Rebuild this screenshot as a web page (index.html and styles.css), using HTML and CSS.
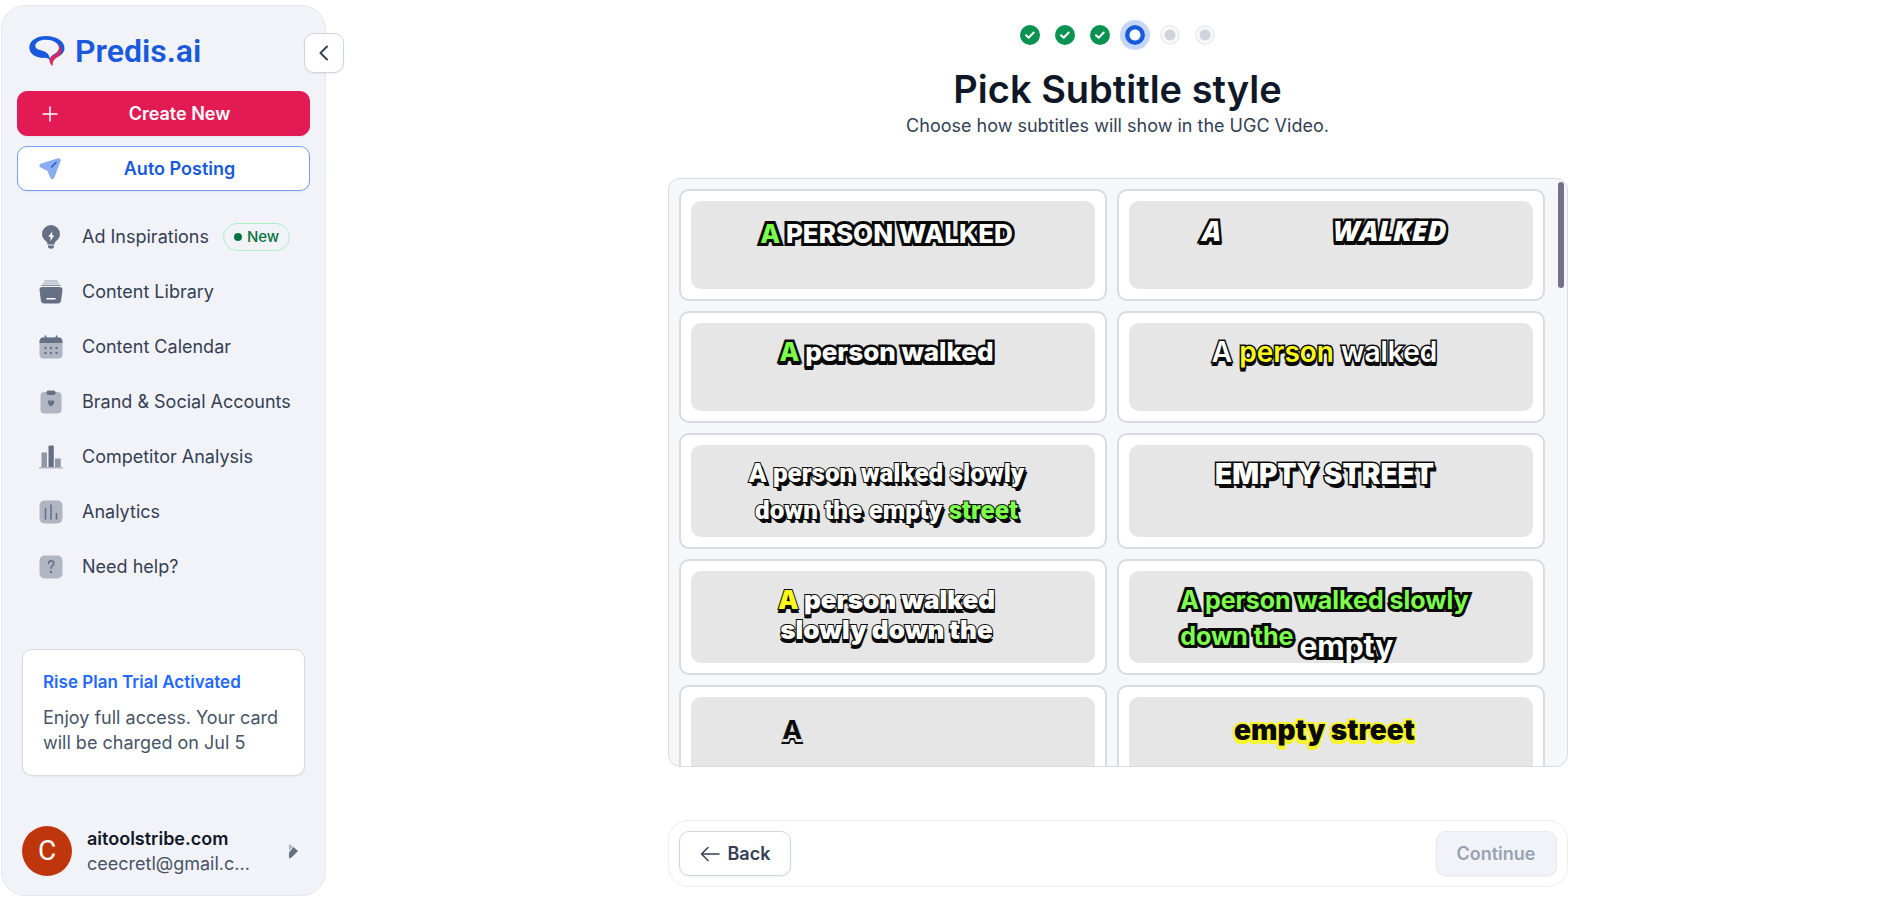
FILE: index.html
```html
<!DOCTYPE html>
<html lang="en">

<head>
    <meta charset="UTF-8">
    <title>Predis.ai - Pick Subtitle style</title>
    <link rel="stylesheet" href="styles.css">
</head>

<body>

    <aside class="sidebar">
        <button class="collapse-btn" aria-label="Collapse sidebar">
            <svg width="20" height="20" viewBox="0 0 20 20" fill="none" stroke="#344054" stroke-width="2" stroke-linecap="round" stroke-linejoin="round"><path d="M13 3.500 6.500 10 13 16.500"/></svg>
        </button>

        <a class="logo" href="#">
            <svg width="36" height="32" viewBox="0 0 36 32">
                <path fill="#185adb" fill-rule="evenodd" d="M17 1C27.500 1 35.500 6 35.500 13c0 3-1.500 5.500-4 7.200-3 2-8 3.300-10 7.300-.3-3-2-4.500-5.500-4.700C10 23.500.3 20.500.3 12.500.3 5.500 8 1 17 1ZM17 4.800C10.500 4.800 6.300 7.500 6.300 11c0 3 3.500 3.800 7 4.700 4 1 6.700 3.300 7.700 7.800 1-2.500 3-4 5.500-5.300 2.500-1.300 3.500-3.200 3.500-5.200C30 8 23.500 4.800 17 4.800Z"/>
                <path fill="#d6295f" d="M29.500 8.500C34 13 33.500 19 28.500 22c-3 2-5 4-5 9-3-2.300-3.700-5.800-2-8.300 1.800-2.700 5-3 7-5.700 1.800-2.300 1.800-5 1-8.500Z"/>
            </svg>
            <span>Predis.ai</span>
        </a>

        <button class="btn btn-create">
            <svg width="24" height="24" viewBox="0 0 24 24" fill="none" stroke="#fff" stroke-width="1.500" stroke-linecap="round"><path d="M12 5v14M5 12h14"/></svg>
            <span>Create New</span>
        </button>
        <button class="btn btn-posting">
            <svg width="24" height="24" viewBox="0 0 24 24">
                <path fill="#8badee" d="M20 1.300 3 6.500C1 7.200.8 9.500 2.600 10.400l6 3c.6.300 1 .8 1.300 1.400l2.300 6c.8 1.900 3.400 1.900 4.100 0L22.600 4c.6-1.700-.9-3.200-2.600-2.700Z"/>
                <path stroke="#185adb" stroke-width="1.500" stroke-linecap="round" d="m13.500 10 4.500-4.500"/>
            </svg>
            <span>Auto Posting</span>
        </button>

        <nav class="nav">
            <a class="nav-item" href="#">
                <svg width="24" height="24" viewBox="0 0 24 24">
                    <path fill="#667085" d="M12 0a9 9 0 0 0-9 9c0 3.500 2 5.500 4.300 7.500.9.800 1.200 1.500 1.200 3h7c0-1.500.3-2.200 1.200-3C19 14.500 21 12.500 21 9a9 9 0 0 0-9-9Z"/>
                    <path fill="#667085" d="M9 20.500h6v1c0 3-6 3-6 0Z"/>
                    <path fill="#fff" d="m13.300 6.500-4 5.300h2.200v4.200l3.700-5.500h-2.100Z"/>
                </svg>
                <span>Ad Inspirations</span>
                <span class="tag">New</span>
            </a>
            <a class="nav-item" href="#">
                <svg width="24" height="24" viewBox="0 0 24 24">
                    <path stroke="#667085" stroke-width="1.300" stroke-linecap="round" opacity=".45" d="M6 1h12M4.500 3.200h15"/>
                    <path stroke="#667085" stroke-width="1.300" stroke-linecap="round" opacity=".75" d="M3 5.400h18"/>
                    <path fill="#667085" d="M3.500 7h17c2 0 3.200 1.200 3 3l-1.300 10c-.3 2.500-1.300 3.500-3.700 3.500h-13c-2.400 0-3.400-1-3.700-3.500L.5 10c-.2-1.800 1-3 3-3Z"/>
                    <path stroke="#fff" stroke-width="1.500" stroke-linecap="round" d="M8 18.800h8"/>
                </svg>
                <span>Content Library</span>
            </a>
            <a class="nav-item" href="#">
                <svg width="24" height="24" viewBox="0 0 24 24">
                    <rect x=".5" y="2.500" width="23" height="21" rx="4" fill="#b0b6c3"/>
                    <path fill="#667085" d="M.5 8c0-4 1-5.500 4.500-5.500h14c3.500 0 4.500 1.500 4.500 5.500Z"/>
                    <path stroke="#667085" stroke-width="1.600" stroke-linecap="round" d="M6.500 1v3M17.500 1v3"/>
                    <g fill="#667085"><circle cx="6.500" cy="13" r="1.200"/><circle cx="12" cy="13" r="1.200"/><circle cx="17.500" cy="13" r="1.200"/><circle cx="6.500" cy="18" r="1.200"/><circle cx="12" cy="18" r="1.200"/><circle cx="17.500" cy="18" r="1.200"/></g>
                </svg>
                <span>Content Calendar</span>
            </a>
            <a class="nav-item" href="#">
                <svg width="24" height="24" viewBox="0 0 24 24">
                    <rect x="1.500" y="2" width="21" height="21.500" rx="4" fill="#b0b6c3"/>
                    <rect x="7.500" y=".5" width="9" height="4.500" rx="1.800" fill="#667085"/>
                    <path fill="#667085" d="M12 16.500c-2-1.200-3.300-2.700-3.300-4.200 0-2.200 2.400-2.500 3.300-1 .9-1.500 3.300-1.200 3.300 1 0 1.500-1.300 3-3.300 4.200Z"/>
                </svg>
                <span>Brand &amp; Social Accounts</span>
            </a>
            <a class="nav-item" href="#">
                <svg width="24" height="24" viewBox="0 0 24 24">
                    <path fill="#8f97a8" d="M2.500 8.500q0-1 1-1h4.500v14.500H2.500ZM16 13.500h5q.8 0 .8.800V22H16Z"/>
                    <path fill="#667085" d="M9.500 1.500q0-1 1-1h3.300q1 0 1 1V22H9.500Z"/>
                    <path stroke="#b0b6c3" stroke-width="1.500" stroke-linecap="round" d="M.7 22.800h22.600"/>
                </svg>
                <span>Competitor Analysis</span>
            </a>
            <a class="nav-item" href="#">
                <svg width="24" height="24" viewBox="0 0 24 24">
                    <rect x=".5" y=".5" width="23" height="23" rx="5" fill="#b0b6c3"/>
                    <path stroke="#667085" stroke-width="1.600" stroke-linecap="round" d="M6.500 8.500v10.500M12 5v14M17.500 13.500V19"/>
                </svg>
                <span>Analytics</span>
            </a>
            <a class="nav-item" href="#">
                <svg width="24" height="24" viewBox="0 0 24 24">
                    <rect x=".5" y=".5" width="23" height="23" rx="5" fill="#b0b6c3"/>
                    <path fill="none" stroke="#667085" stroke-width="1.600" stroke-linecap="round" d="M9.500 8.500c0-3.500 5.300-3.500 5.300-.2 0 2.400-2.800 2.400-2.800 5"/>
                    <circle cx="12" cy="17" r="1.200" fill="#667085"/>
                </svg>
                <span>Need help?</span>
            </a>
        </nav>

        <div class="plan-card">
            <h2>Rise Plan Trial Activated</h2>
            <p>Enjoy full access. Your card will be charged on Jul 5</p>
        </div>

        <div class="profile">
            <div class="avatar">C</div>
            <div class="profile-text">
                <div class="profile-name">aitoolstribe.com</div>
                <div class="profile-email">ceecretl@gmail.c...</div>
            </div>
            <svg width="10" height="16" viewBox="0 0 10 16"><path fill="#b0b6c3" d="M1 .8 5 4 1 7.500Z"/><path fill="#667085" d="M5.500 4 10 8 3.500 14.500 1 15.500V9.500Z"/></svg>
        </div>
    </aside>

    <main class="main">
        <div class="steps">
            <span class="step done"><svg width="20" height="20" viewBox="0 0 20 20"><path d="m6 10.200 2.700 2.600 5-5.300"/></svg></span>
            <span class="step done"><svg width="20" height="20" viewBox="0 0 20 20"><path d="m6 10.200 2.700 2.600 5-5.300"/></svg></span>
            <span class="step done"><svg width="20" height="20" viewBox="0 0 20 20"><path d="m6 10.200 2.700 2.600 5-5.300"/></svg></span>
            <span class="step active"></span>
            <span class="step"></span>
            <span class="step"></span>
        </div>

        <h1>Pick Subtitle style</h1>
        <p class="subtitle">Choose how subtitles will show in the UGC Video.</p>

        <div class="panel">
            <div class="style-grid">
                <button class="style-card"><span class="preview cap-pop"><span><b class="green">A</b> PERSON WALKED</span></span></button>
                <button class="style-card"><span class="preview cap-slant"><span>A</span><span>WALKED</span></span></button>
                <button class="style-card"><span class="preview cap-bold"><span><b class="green">A</b> person walked</span></span></button>
                <button class="style-card"><span class="preview cap-soft"><span>A <b class="yellow">person</b> walked</span></span></button>
                <button class="style-card"><span class="preview tall cap-drop"><span>A person walked slowly<br>down the empty <b class="green">street</b></span></span></button>
                <button class="style-card"><span class="preview tall cap-block"><span>EMPTY STREET</span></span></button>
                <button class="style-card"><span class="preview tall cap-heavy"><span><b class="yellow">A</b> person walked<br>slowly down the</span></span></button>
                <button class="style-card"><span class="preview tall cap-rise"><span>A person walked slowly<br>down the <b>empty</b></span></span></button>
                <button class="style-card"><span class="preview tall cap-plain"><span>A</span></span></button>
                <button class="style-card"><span class="preview tall cap-glow"><span>empty street</span></span></button>
            </div>
            <div class="scroll-thumb"></div>
        </div>

        <div class="actions">
            <button class="action-btn">
                <svg width="20" height="20" viewBox="0 0 20 20" fill="none" stroke="#344054" stroke-width="1.500" stroke-linecap="round" stroke-linejoin="round"><path d="M19 10H1.500M8 3.500 1.500 10 8 16.500"/></svg>
                Back
            </button>
            <button class="action-btn" disabled>Continue</button>
        </div>
    </main>

</body>

</html>
```
FILE: styles.css
```css
* {
    box-sizing: border-box;
    margin: 0;
    padding: 0;
}

body {
    display: flex;
    gap: 8px;
    height: 100vh;
    padding: 5px 0 1px 1px;
    overflow: hidden;
    background: #fff;
    color: #344054;
    font-family: Inter, "Liberation Sans", sans-serif;
    font-size: 18px;
    line-height: 25px;
}

button {
    font: inherit;
    cursor: pointer;
}

a {
    color: inherit;
    text-decoration: none;
}

svg {
    flex: none;
}

/* Sidebar */
.sidebar {
    position: relative;
    display: flex;
    flex-direction: column;
    flex: 0 0 325px;
    padding: 25px 15px 19px;
    background: #f2f3f8;
    border: 1px solid #e6e8ed;
    border-radius: 24px;
}

.collapse-btn {
    position: absolute;
    top: 27px;
    right: -19px;
    display: flex;
    align-items: center;
    justify-content: center;
    width: 40px;
    height: 40px;
    background: #fff;
    border: 1px solid #d0d5dd;
    border-radius: 10px;
    box-shadow: 0 1px 2px rgba(16, 24, 40, 0.06);
}

.logo {
    display: flex;
    align-items: center;
    gap: 10px;
    height: 40px;
    margin: 0 0 20px 12px;
    color: #185adb;
    font-family: Roboto, sans-serif;
    font-size: 32px;
    font-weight: 600;
    line-height: 38px;
}

.btn {
    display: flex;
    align-items: center;
    height: 45px;
    margin-bottom: 10px;
    padding: 0 12px 0 20px;
    border: 1px solid #e31b54;
    border-radius: 10px;
    font-weight: 600;
    box-shadow: 0 1px 2px rgba(16, 24, 40, 0.06);
}

.btn span {
    flex: 1;
    text-align: center;
}

.btn-create {
    background: #e31b54;
    color: #fff;
}

.btn-posting {
    background: #fff;
    border-color: #74a0f5;
    color: #185adb;
}

.nav {
    display: flex;
    flex-direction: column;
    gap: 10px;
    margin-top: 13px;
}

.nav-item {
    display: flex;
    align-items: center;
    height: 45px;
    padding-left: 22px;
}

.nav-item svg {
    margin-right: 19px;
}

.tag {
    display: flex;
    align-items: center;
    gap: 5px;
    height: 28px;
    margin-left: 14px;
    padding: 0 10px;
    border: 1px solid #aaf0c4;
    border-radius: 14px;
    color: #087443;
    font-size: 15px;
    font-weight: 500;
}

.tag::before {
    content: "";
    width: 8px;
    height: 8px;
    border-radius: 50%;
    background: #087443;
}

.plan-card {
    margin: auto 5px 50px;
    padding: 20px;
    background: #fff;
    border: 1px solid #d9dbe3;
    border-radius: 10px;
    box-shadow: 0 1px 2px rgba(16, 24, 40, 0.06);
    color: #475467;
}

.plan-card h2 {
    margin-bottom: 10px;
    color: #1f69ff;
    font-size: 17px;
    font-weight: 600;
}

.profile {
    display: flex;
    align-items: center;
    gap: 15px;
    padding: 0 12px 0 5px;
}

.avatar {
    width: 50px;
    height: 50px;
    border-radius: 50%;
    background: #bf360c;
    color: #fff;
    font-family: Roboto, sans-serif;
    font-size: 28px;
    line-height: 50px;
    text-align: center;
}

.profile-text {
    flex: 1;
}

.profile-name {
    color: #101828;
    font-weight: 600;
}

.profile-email {
    color: #475467;
}

/* Main column */
.main {
    display: flex;
    flex-direction: column;
    align-items: center;
    flex: 1;
    padding: 20px 0 9px;
}

.steps {
    display: flex;
    gap: 15px;
    margin-bottom: 20px;
}

.step {
    width: 20px;
    height: 20px;
    border: 2px solid #eceef2;
    border-radius: 50%;
    background: radial-gradient(circle, #d0d5dd 5px, #f9fafb 6px);
}

.step.done {
    border: none;
    background: #099250;
}

.step.done path {
    fill: none;
    stroke: #fff;
    stroke-width: 2;
    stroke-linecap: round;
    stroke-linejoin: round;
}

.step.active {
    border: none;
    background: radial-gradient(circle, #fff 5px, #185adb 6px);
    box-shadow: 0 0 0 5px #c5d6f6;
}

h1 {
    color: #101828;
    font-size: 38px;
    font-weight: 600;
    line-height: 48px;
}

.subtitle {
    margin-bottom: 40px;
}

.panel {
    position: relative;
    width: 900px;
    max-width: 100%;
    flex: 1;
    min-height: 0;
    overflow: hidden;
    background: #f5f7f9;
    border: 1px solid #d9dbe3;
    border-radius: 12px;
}

.style-grid {
    display: grid;
    grid-template-columns: 1fr 1fr;
    gap: 10px;
    height: 100%;
    padding: 10px 22px 10px 10px;
    overflow-y: auto;
    scrollbar-width: none;
}

.scroll-thumb {
    position: absolute;
    top: 3px;
    right: 3px;
    width: 6px;
    height: 106px;
    border-radius: 3px;
    background: #76708a;
}

.style-card {
    padding: 10px;
    background: #fff;
    border: 2px solid #d9dbe3;
    border-radius: 10px;
}

/* Caption previews */
.preview {
    display: flex;
    justify-content: center;
    height: 88px;
    padding: 12px 12px 0 0;
    overflow: hidden;
    border-radius: 10px;
    background: #e6e6e6;
    color: #fff;
    font-size: 26px;
    font-weight: 800;
    line-height: 34px;
    -webkit-text-stroke: 5px #0a0a0a;
    paint-order: stroke fill;
}

.preview.tall {
    height: 92px;
}

.preview b {
    font-weight: inherit;
}

.green {
    color: #7dff4d;
}

.yellow {
    color: #f8f81a;
}

.cap-pop {
    padding-top: 16px;
    -webkit-text-stroke-width: 6px;
}

.cap-slant {
    gap: 112px;
    font-family: "Open Sans", sans-serif;
    font-size: 28px;
    font-style: italic;
    text-shadow: 2px 4px #0a0a0a, -2px 4px #0a0a0a;
}

.cap-bold {
    text-shadow: 2px 4px #0a0a0a, -2px 4px #0a0a0a;
}

.cap-soft {
    font-size: 28px;
    font-weight: 600;
    text-shadow: 1px 4px #0a0a0a, -1px 4px #0a0a0a;
    -webkit-text-stroke-width: 3px;
}

.cap-drop {
    padding-top: 10px;
    font-family: Roboto, sans-serif;
    font-weight: 900;
    line-height: 37px;
    text-shadow: 2px 2px #0a0a0a, 3px 4px #0a0a0a;
    -webkit-text-stroke-width: 2px;
}

.cap-block {
    font-size: 28px;
    font-weight: 900;
    text-shadow: 2px 2px #0a0a0a, 3px 4px #0a0a0a;
    -webkit-text-stroke-width: 3px;
}

.cap-heavy {
    padding-top: 14px;
    font-weight: 900;
    line-height: 30px;
    text-shadow: 1px 4px #0a0a0a, -1px 4px #0a0a0a;
    -webkit-text-stroke-width: 2px;
}

.cap-rise {
    color: #7dff4d;
    font-size: 25px;
    font-weight: 700;
    text-align: left;
    -webkit-text-stroke-width: 6px;
}

.cap-rise b {
    position: relative;
    top: 12px;
    color: #fff;
    font-size: 30px;
}

.cap-plain {
    justify-content: flex-start;
    padding: 16px 0 0 92px;
    color: #0a0a0a;
    font-weight: 700;
    text-shadow: 1px 3px #e6e6e6, -1px 3px #e6e6e6, 2px 5px #0a0a0a, -2px 5px #0a0a0a;
    -webkit-text-stroke-width: 0;
}

.cap-glow {
    padding-top: 16px;
    color: #0a0a0a;
    font-size: 28px;
    font-weight: 900;
    text-shadow: 1px 4px #f5f52a, -1px 4px #f5f52a;
    -webkit-text-stroke: 4px #f5f52a;
}

/* Bottom bar */
.actions {
    display: flex;
    justify-content: space-between;
    width: 900px;
    max-width: 100%;
    margin-top: 53px;
    padding: 10px;
    border: 1px solid #eceef2;
    border-radius: 20px;
}

.action-btn {
    display: flex;
    align-items: center;
    gap: 8px;
    height: 45px;
    padding: 0 20px;
    background: #fff;
    border: 1px solid #d0d5dd;
    border-radius: 10px;
    color: #344054;
    font-weight: 600;
    box-shadow: 0 1px 2px rgba(16, 24, 40, 0.06);
}

.action-btn:disabled {
    background: #f2f3f8;
    border-color: #e6e8ed;
    color: #98a2b3;
    cursor: default;
}
```
